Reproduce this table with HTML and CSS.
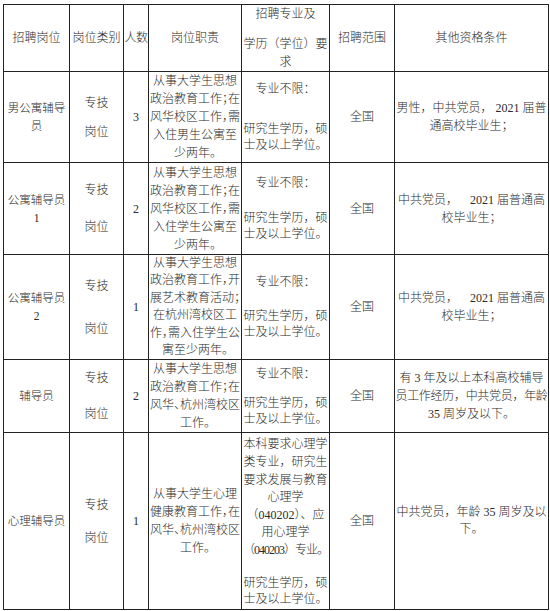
FILE: index.html
```html
<!DOCTYPE html>
<html lang="zh">
<head>
<meta charset="utf-8">
<title>招聘岗位</title>
<link rel="stylesheet" href="styles.css">
</head>
<body>
<table class="jobs">
  <colgroup>
    <col class="w-name"><col class="w-type"><col class="w-num"><col class="w-duty"><col class="w-major"><col class="w-scope"><col class="w-other">
  </colgroup>
  <tr class="head">
    <th>招聘岗位</th>
    <th>岗位类别</th>
    <th class="num-h">人数</th>
    <th>岗位职责</th>
    <th class="major-h"><span class="l1">招聘专业及</span><span>学历（学位）要</span><span>求</span></th>
    <th>招聘范围</th>
    <th>其他资格条件</th>
  </tr>
  <tr class="r1">
    <td class="name">男公寓辅导<br>员</td>
    <td class="type"><span>专技</span><span class="lo">岗位</span></td>
    <td class="num">3</td>
    <td class="duty">从事大学生思想<br>政治教育工作；在<br>风华校区工作，需<br>入住男生公寓至<br>少两年。</td>
    <td class="major"><span class="top">专业不限：</span><span class="lo">研究生学历，硕</span><span class="bl">士及以上学位。</span></td>
    <td class="scope">全国</td>
    <td class="other">男性，中共党员， 2021 届普<br>通高校毕业生；</td>
  </tr>
  <tr class="r2">
    <td class="name">公寓辅导员<br>1</td>
    <td class="type"><span>专技</span><span class="lo">岗位</span></td>
    <td class="num">2</td>
    <td class="duty">从事大学生思想<br>政治教育工作；在<br>风华校区工作，需<br>入住学生公寓至<br>少两年。</td>
    <td class="major"><span class="top">专业不限：</span><span class="lo">研究生学历，硕</span><span class="bl">士及以上学位。</span></td>
    <td class="scope">全国</td>
    <td class="other">中共党员，&nbsp;&nbsp;&nbsp; 2021 届普通高<br>校毕业生；</td>
  </tr>
  <tr class="r3">
    <td class="name">公寓辅导员<br>2</td>
    <td class="type"><span>专技</span><span class="lo">岗位</span></td>
    <td class="num">1</td>
    <td class="duty">从事大学生思想<br>政治教育工作，开<br>展艺术教育活动；<br>在杭州湾校区工<br>作，需入住学生公<br>寓至少两年。</td>
    <td class="major"><span class="top">专业不限：</span><span class="lo">研究生学历，硕</span><span class="bl">士及以上学位。</span></td>
    <td class="scope">全国</td>
    <td class="other">中共党员，&nbsp;&nbsp;&nbsp; 2021 届普通高<br>校毕业生；</td>
  </tr>
  <tr class="r4">
    <td class="name">辅导员</td>
    <td class="type"><span>专技</span><span class="lo">岗位</span></td>
    <td class="num">2</td>
    <td class="duty">从事大学生思想<br>政治教育工作；在<br>风华、杭州湾校区<br>工作。</td>
    <td class="major"><span class="top">专业不限：</span><span class="lo">研究生学历，硕</span><span class="bl">士及以上学位。</span></td>
    <td class="scope">全国</td>
    <td class="other">有 3 年及以上本科高校辅导<br><span class="tight">员工作经历，中共党员，年龄</span><br>35 周岁及以下。</td>
  </tr>
  <tr class="r5">
    <td class="name">心理辅导员</td>
    <td class="type"><span>专技</span><span class="lo">岗位</span></td>
    <td class="num">1</td>
    <td class="duty">从事大学生心理<br>健康教育工作，在<br>风华、杭州湾校区<br>工作。</td>
    <td class="major"><span class="top">本科要求心理学<br>类专业，研究生<br>要求发展与教育<br>心理学<br>（040202）、应<br>用心理学<br><span class="tight1">（040203）专业。</span></span><span class="lo">研究生学历，硕</span><span class="bl">士及以上学位。</span></td>
    <td class="scope">全国</td>
    <td class="other">中共党员，年龄 35 周岁及以<br>下。</td>
  </tr>
</table>
</body>
</html>
```

FILE: styles.css
```css
body {
  margin: 0;
  background: #fff;
}

.jobs {
  border-collapse: collapse;
  table-layout: fixed;
  width: 546px;
  margin: 4px 0 0 3px;
  font-family: "Liberation Serif", "Noto Sans CJK SC", serif;
  font-size: 12px;
  font-weight: 300;
  color: #2b2b2b;
}

.w-name { width: 66px; }
.w-type { width: 54px; }
.w-num { width: 25px; }
.w-duty { width: 93px; }
.w-major { width: 88px; }
.w-scope { width: 65px; }
.w-other { width: 154px; }

.jobs th,
.jobs td {
  border: 1px solid #222;
  padding: 0;
  text-align: center;
  vertical-align: middle;
  font-weight: 300;
  white-space: nowrap;
  line-height: 18px;
}

.head { height: 67px; }
.r1 { height: 89px; }
.r2 { height: 92px; }
.r3 { height: 105px; }
.r4 { height: 73px; }
.r5 { height: 177px; }

.num-h { letter-spacing: -0.5px; }

.major-h span { display: block; }
.major-h .l1 { margin-bottom: 12px; }

.name {
  font-size: 11.5px;
  line-height: 15px;
}

.type span { display: block; }
.r1 .type .lo { margin-top: 11px; }
.r2 .type .lo { margin-top: 19px; }
.r3 .type .lo { margin-top: 25px; }
.r4 .type .lo { margin-top: 18px; }
.r5 .type .lo { margin-top: 15px; }

.duty {
  line-height: 17.6px;
  font-feature-settings: "halt";
}
.r3 .duty { line-height: 17.4px; }

.major span.top,
.major span.lo,
.major span.bl { display: block; }
.major .top { line-height: 17.6px; }
.major .lo,
.major .bl { line-height: 16px; }
.r1 .major .lo { margin-top: 22px; }
.r2 .major .lo { margin-top: 17px; }
.r3 .major .lo { margin-top: 16px; }
.r4 .major .lo { margin-top: 11px; }
.r5 .major .lo { margin-top: 15px; }

.tight1 { letter-spacing: -1px; }

.other { line-height: 19px; }
.r5 .other { line-height: 17px; }
.tight { letter-spacing: -0.3px; }
```
